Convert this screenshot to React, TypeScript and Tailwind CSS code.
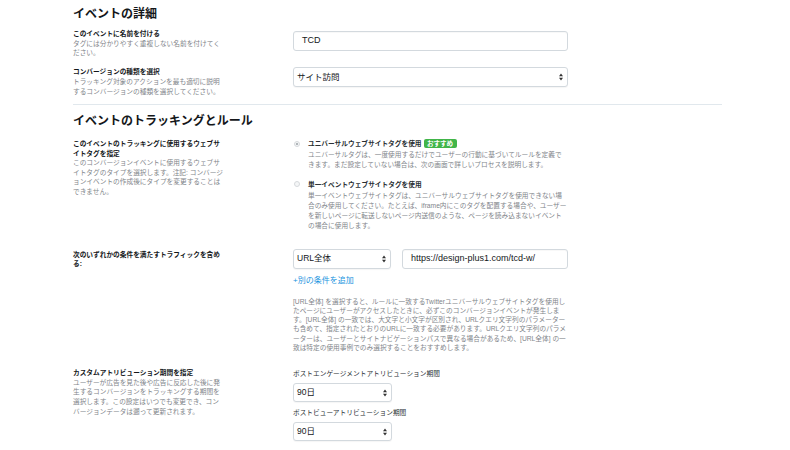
import React from "react";

const FONT = { fontFamily: '"Liberation Sans", "Noto Sans CJK JP", sans-serif' };

function Lines({ lines, className = "" }: { lines: string[]; className?: string }) {
  return (
    <div className={className}>
      {lines.map((l, i) => (
        <span key={i} className="block whitespace-nowrap">
          {l}
        </span>
      ))}
    </div>
  );
}

function Arrows() {
  return (
    <svg width="4" height="8" viewBox="0 0 4 8" className="shrink-0">
      <path d="M0 3.3 L2 0.6 L4 3.3Z M0 4.7 L2 7.4 L4 4.7Z" fill="#333" />
    </svg>
  );
}

function Select({ value, className = "" }: { value: string; className?: string }) {
  return (
    <div
      className={`flex items-center justify-between bg-white border border-[#d3d9de] rounded-[3px] shadow-[0_1px_1px_rgba(0,0,0,0.04)] pl-[3px] pr-[4px] text-[8.5px] text-[#14171a] ${className}`}
    >
      <span>{value}</span>
      <Arrows />
    </div>
  );
}

function TextBox({ value, className = "" }: { value: string; className?: string }) {
  return (
    <div
      className={`flex items-center bg-white border border-[#d3d9de] rounded-[3px] shadow-[inset_0_1px_1px_rgba(0,0,0,0.03)] pl-[8px] text-[9px] text-[#14171a] ${className}`}
    >
      {value}
    </div>
  );
}

function Label({ lines }: { lines: string[] }) {
  return <Lines lines={lines} className="font-bold text-[#14171a]" />;
}

function Desc({ lines, className = "" }: { lines: string[]; className?: string }) {
  return <Lines lines={lines} className={`text-[#7f858a] ${className}`} />;
}

function Radio({ checked }: { checked?: boolean }) {
  return (
    <span className="ml-[1px] mr-[8px] mt-[2.5px] w-[6px] h-[6px] rounded-full border border-[#d6d9dc] bg-[#f5f6f7] flex items-center justify-center shrink-0">
      {checked && <span className="w-[2px] h-[2px] rounded-full bg-[#9aa0a6]" />}
    </span>
  );
}

export default function App() {
  return (
    <div
      className="w-[790px] h-[450px] bg-white overflow-hidden pl-[73px] text-[6.7px] leading-[9.6px]"
      style={FONT}
    >
      <div className="w-[649px]">
        <h2 className="pt-[6.5px] text-[12px] leading-[15px] font-bold text-[#14171a]">イベントの詳細</h2>

        <div className="grid grid-cols-[220px_1fr] mt-[7.5px]">
          <div>
            <Label lines={["このイベントに名前を付ける"]} />
            <Desc lines={["タグには分かりやすく重複しない名前を付けてく", "ださい。"]} />
          </div>
          <TextBox value="TCD" className="mt-[2px] w-[275px] h-[20px]" />
        </div>

        <div className="grid grid-cols-[220px_1fr] mt-[9.7px]">
          <div>
            <Label lines={["コンバージョンの種類を選択"]} />
            <Desc lines={["トラッキング対象のアクションを最も適切に説明", "するコンバージョンの種類を選択してください。"]} />
          </div>
          <Select value="サイト訪問" className="w-[275px] h-[20px]" />
        </div>

        <div className="mt-[7.5px] border-t border-[#e1e8ed]" />

        <h2 className="mt-[9.5px] text-[12px] leading-[15px] font-bold text-[#14171a]">
          イベントのトラッキングとルール
        </h2>

        <div className="grid grid-cols-[220px_1fr] mt-[9px]">
          <div className="pt-[0.8px]">
            <Label lines={["このイベントのトラッキングに使用するウェブサ", "イトタグを指定"]} />
            <Desc
              lines={[
                "このコンバージョンイベントに使用するウェブサ",
                "イトタグのタイプを選択します。注記: コンバージ",
                "ョンイベントの作成後にタイプを変更することは",
                "できません。",
              ]}
            />
          </div>
          <div>
            <div className="flex">
              <Radio checked />
              <div>
                <div className="flex items-center leading-[11px]">
                  <span className="font-bold text-[#292f33]">ユニバーサルウェブサイトタグを使用</span>
                  <span className="ml-[2px] px-[3.5px] h-[9px] leading-[9px] rounded-[2px] bg-[#41b549] text-white font-bold text-[6.5px]">
                    おすすめ
                  </span>
                </div>
                <Desc
                  className="mt-[1px]"
                  lines={[
                    "ユニバーサルタグは、一度使用するだけでユーザーの行動に基づいてルールを定義で",
                    "きます。まだ設定していない場合は、次の画面で詳しいプロセスを説明します。",
                  ]}
                />
              </div>
            </div>
            <div className="flex mt-[9.5px]">
              <Radio />
              <div>
                <div className="leading-[11px] font-bold text-[#292f33]">単一イベントウェブサイトタグを使用</div>
                <Desc
                  className="mt-[1.5px] leading-[9.7px]"
                  lines={[
                    "単一イベントウェブサイトタグは、ユニバーサルウェブサイトタグを使用できない場",
                    "合のみ使用してください。たとえば、iframe内にこのタグを配置する場合や、ユーザー",
                    "を新しいページに転送しないページ内送信のような、ページを読み込まないイベント",
                    "の場合に使用します。",
                  ]}
                />
              </div>
            </div>
          </div>
        </div>

        <div className="grid grid-cols-[220px_1fr] mt-[19px]">
          <div className="pt-[0.5px]">
            <Label lines={["次のいずれかの条件を満たすトラフィックを含め", "る:"]} />
          </div>
          <div>
            <div className="flex gap-[11px]">
              <Select value="URL全体" className="w-[98px] h-[20px]" />
              <TextBox value="https://design-plus1.com/tcd-w/" className="w-[166px] h-[20px]" />
            </div>
            <div className="mt-[7px] text-[8px] leading-[10px] text-[#1b95e0]">+別の条件を追加</div>
            <Desc
              className="mt-[10.3px] leading-[9.3px]"
              lines={[
                "[URL全体] を選択すると、ルールに一致するTwitterユニバーサルウェブサイトタグを使用し",
                "たページにユーザーがアクセスしたときに、必ずこのコンバージョンイベントが発生しま",
                "す。[URL全体] の一致では、大文字と小文字が区別され、URLクエリ文字列のパラメーター",
                "も含めて、指定されたとおりのURLに一致する必要があります。URLクエリ文字列のパラメ",
                "ーターは、ユーザーとサイトナビゲーションパスで異なる場合があるため、[URL全体] の一",
                "致は特定の使用事例でのみ選択することをおすすめします。",
              ]}
            />
          </div>
        </div>

        <div className="grid grid-cols-[220px_1fr] mt-[15.8px]">
          <div>
            <Label lines={["カスタムアトリビューション期間を指定"]} />
            <Desc
              lines={[
                "ユーザーが広告を見た後や広告に反応した後に発",
                "生するコンバージョンをトラッキングする期間を",
                "選択します。この設定はいつでも変更でき、コン",
                "バージョンデータは遡って更新されます。",
              ]}
            />
          </div>
          <div>
            <div className="mt-[1.2px] text-[#292f33]">ポストエンゲージメントアトリビューション期間</div>
            <Select value="90日" className="mt-[4.2px] w-[99px] h-[19px]" />
            <div className="mt-[6.2px] text-[#292f33]">ポストビューアトリビューション期間</div>
            <Select value="90日" className="mt-[4.2px] w-[99px] h-[19px]" />
          </div>
        </div>
      </div>
    </div>
  );
}
